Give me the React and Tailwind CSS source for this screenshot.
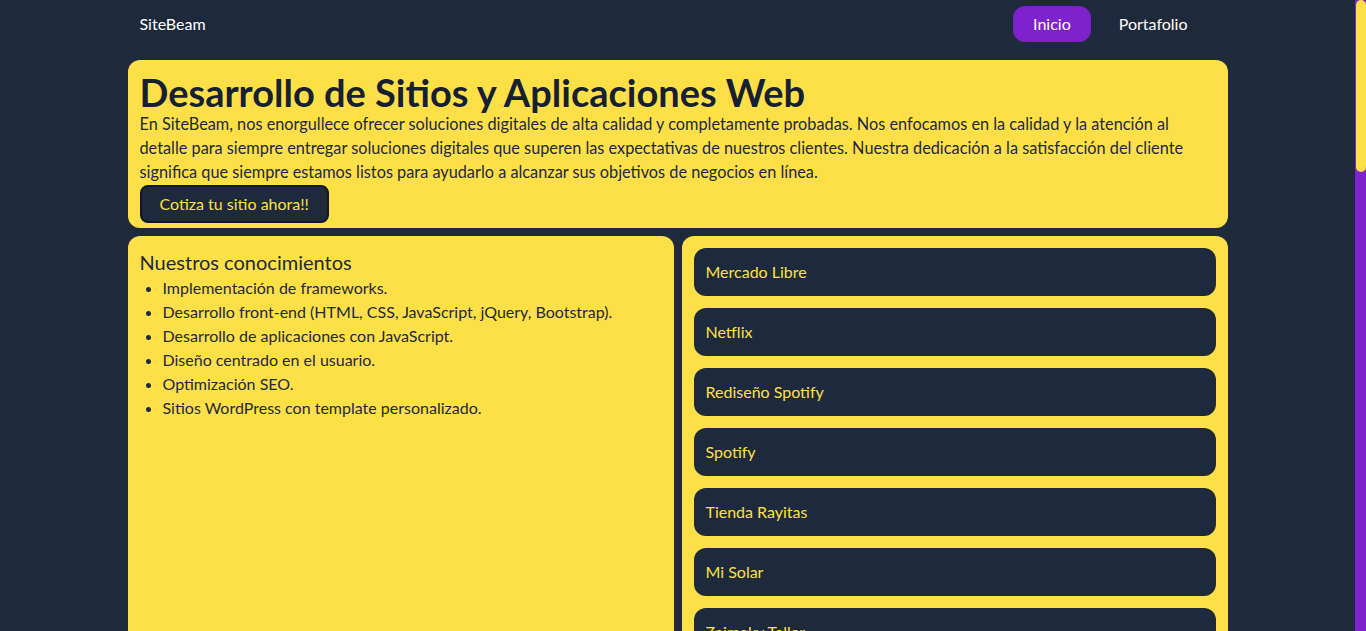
const portfolio = [
  'Mercado Libre',
  'Netflix',
  'Rediseño Spotify',
  'Spotify',
  'Tienda Rayitas',
  'Mi Solar',
  'Zaimaky Taller',
];

const skills = [
  'Implementación de frameworks.',
  'Desarrollo front-end (HTML, CSS, JavaScript, jQuery, Bootstrap).',
  'Desarrollo de aplicaciones con JavaScript.',
  'Diseño centrado en el usuario.',
  'Optimización SEO.',
  'Sitios WordPress con template personalizado.',
];

export default function App() {
  return (
    <div
      className="flex h-screen overflow-hidden bg-[#1e293b] text-[#1e293b]"
      style={{ fontFamily: 'Lato, "Open Sans", sans-serif' }}
    >
      <main className="min-w-0 flex-1">
        <div className="mx-auto max-w-[1100px]">
          <nav className="flex h-[47px] items-center justify-between pl-3 pr-5 pt-[1px]">
            <a className="text-base text-white">SiteBeam</a>
            <ul className="flex gap-2">
              <li>
                <a className="block rounded-xl bg-[#7e22ce] px-5 py-[6px] text-base leading-6 text-white">Inicio</a>
              </li>
              <li>
                <a className="block rounded-xl px-5 py-[6px] text-base leading-6 text-white">Portafolio</a>
              </li>
            </ul>
          </nav>

          <section className="mt-[13px] rounded-xl bg-[#fde047] px-3 pb-[5px] pt-3">
            <h1 className="text-[38px] font-bold leading-[40px] text-[#172033]">Desarrollo de Sitios y Aplicaciones Web</h1>
            <p className="max-w-[1060px] text-[16.3px] leading-6">
              En SiteBeam, nos enorgullece ofrecer soluciones digitales de alta calidad y completamente probadas. Nos enfocamos en la calidad y la atención al detalle para siempre entregar soluciones digitales que superen las expectativas de nuestros clientes. Nuestra dedicación a la satisfacción del cliente significa que siempre estamos listos para ayudarlo a alcanzar sus objetivos de negocios en línea.
            </p>
            <button className="mt-px rounded-lg border-2 border-[#111827] bg-[#1e293b] px-[18px] py-[5px] text-base leading-6 text-[#fde047]">
              Cotiza tu sitio ahora!!
            </button>
          </section>

          <div className="mt-2 grid grid-cols-2 gap-2">
            <section className="rounded-xl bg-[#fde047] p-3">
              <h2 className="text-xl leading-7">Nuestros conocimientos</h2>
              <ul className="list-disc pl-[23px] text-base leading-6">
                {skills.map((s) => (
                  <li key={s}>{s}</li>
                ))}
              </ul>
            </section>

            <section className="flex flex-col gap-3 rounded-xl bg-[#fde047] p-3">
              {portfolio.map((p) => (
                <a key={p} className="block rounded-xl bg-[#1e293b] px-3 py-3 text-base leading-6 text-[#fde047]">
                  {p}
                </a>
              ))}
            </section>
          </div>
        </div>
      </main>

      <aside className="w-[11px] shrink-0 bg-[#7e22ce]">
        <div className="ml-px h-[172px] rounded-full bg-[#fde047]" />
      </aside>
    </div>
  );
}
